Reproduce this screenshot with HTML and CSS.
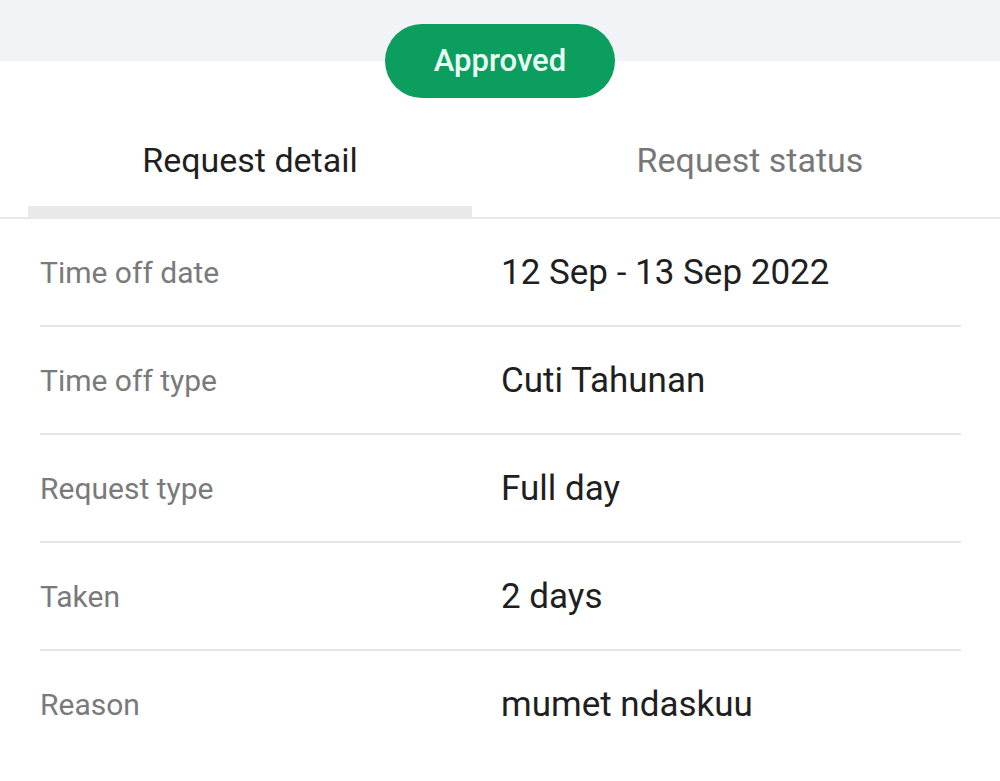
FILE: index.html
```html
<!DOCTYPE html>
<html>
<head>
<meta charset="utf-8">
<link rel="stylesheet" href="styles.css">
</head>
<body>
<div class="top">
  <div class="pill">Approved</div>
</div>
<div class="tabs">
  <div class="tab active"><span class="tab-label">Request detail</span><div class="indicator"></div></div>
  <div class="tab"><span class="tab-label">Request status</span></div>
</div>
<div class="rows">
  <div class="row"><div class="label">Time off date</div><div class="value">12 Sep - 13 Sep 2022</div></div>
  <div class="row"><div class="label">Time off type</div><div class="value">Cuti Tahunan</div></div>
  <div class="row"><div class="label">Request type</div><div class="value">Full day</div></div>
  <div class="row"><div class="label">Taken</div><div class="value">2 days</div></div>
  <div class="row last"><div class="label">Reason</div><div class="value">mumet ndaskuu</div></div>
</div>
</body>
</html>
```
FILE: styles.css
```css
html, body {
  margin: 0;
  padding: 0;
  background: #ffffff;
  font-family: Roboto, "Liberation Sans", sans-serif;
}
.top {
  background: linear-gradient(#f1f3f6 0, #f1f3f6 61px, #ffffff 61px);
  padding-top: 24px;
  display: flex;
  justify-content: center;
}
.pill {
  width: 230px;
  height: 74px;
  border-radius: 37px;
  background: #0b9e5f;
  color: #eafff4;
  font-size: 31px;
  font-weight: 500;
  display: flex;
  align-items: center;
  justify-content: center;
  padding-bottom: 1px;
  box-sizing: border-box;
}
.tabs {
  display: flex;
  border-bottom: 2px solid #e9e9e9;
}
.tab {
  flex: 1;
  height: 119px;
  display: flex;
  flex-direction: column;
  align-items: center;
  justify-content: flex-end;
  font-size: 34px;
  color: #777777;
}
.tab.active {
  color: #1f1f1f;
}
.tab-label {
  margin-bottom: 26px;
}
.indicator {
  align-self: stretch;
  margin: 0 28px;
  height: 11px;
  background: #e9e9e9;
}
.tab:not(.active)::after {
  content: "";
  display: block;
  height: 11px;
}
.rows {
  padding: 0 39px 0 40px;
}
.row {
  display: flex;
  align-items: center;
  height: 106px;
  border-bottom: 2px solid #e4e4e4;
}
.row.last {
  border-bottom: none;
}
.label {
  width: 461px;
  font-size: 30px;
  color: #7a7a7a;
}
.value {
  font-size: 35px;
  color: #1f1f1f;
}
```
